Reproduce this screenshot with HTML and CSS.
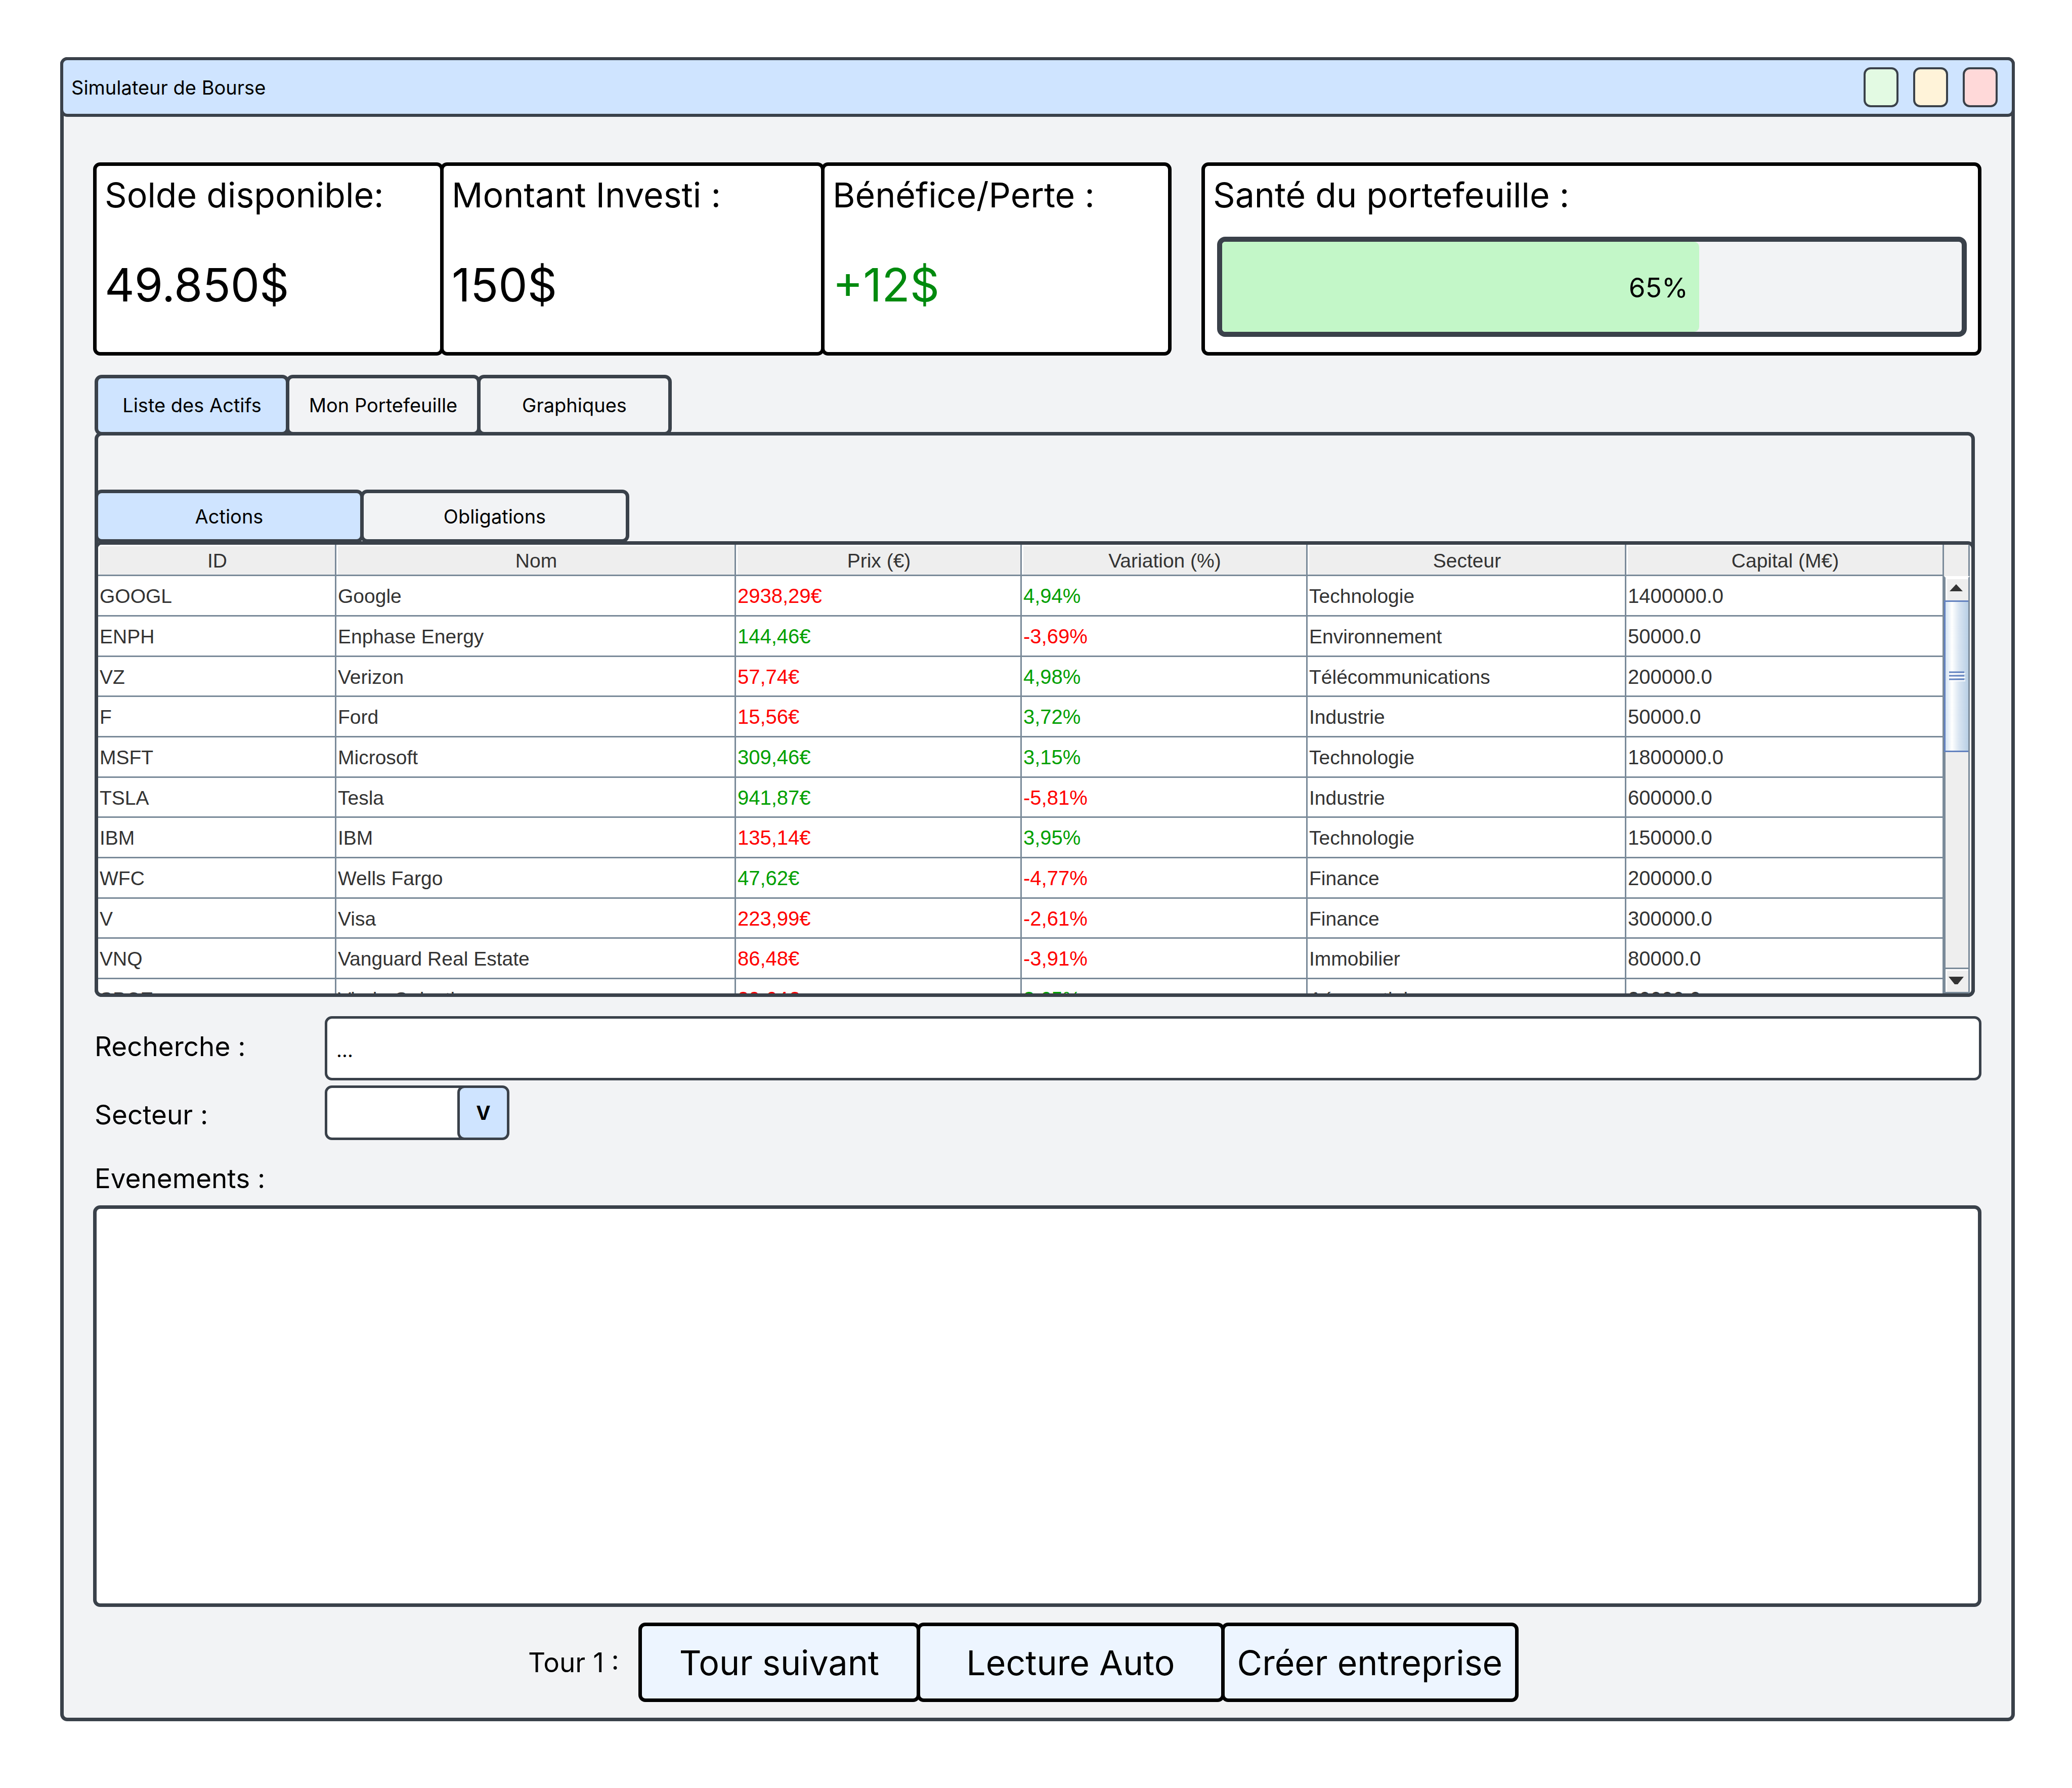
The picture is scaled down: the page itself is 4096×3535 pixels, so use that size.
FILE: index.html
```html
<!DOCTYPE html>
<html lang="fr">
<head>
<meta charset="utf-8">
<meta name="viewport" content="width=device-width, initial-scale=1">
<title>Simulateur de Bourse</title>
<link rel="stylesheet" href="styles.css">
</head>
<body>
<div class="window">
  <header class="titlebar">
    <h1 class="titlebar-text">Simulateur de Bourse</h1>
    <div class="titlebar-buttons">
      <button class="win-btn win-min" type="button" aria-label="Réduire"></button>
      <button class="win-btn win-max" type="button" aria-label="Agrandir"></button>
      <button class="win-btn win-close" type="button" aria-label="Fermer"></button>
    </div>
  </header>

  <main class="content">
    <section class="summary">
      <div class="card card-joined">
        <h2 class="card-label">Solde disponible:</h2>
        <p class="card-value">49.850$</p>
      </div>
      <div class="card card-joined">
        <h2 class="card-label">Montant Investi :</h2>
        <p class="card-value">150$</p>
      </div>
      <div class="card">
        <h2 class="card-label">Bénéfice/Perte :</h2>
        <p class="card-value gain">+12$</p>
      </div>
      <div class="card card-health">
        <h2 class="card-label">Santé du portefeuille :</h2>
        <div class="meter" role="progressbar" aria-label="Santé du portefeuille" aria-valuemin="0" aria-valuemax="100" aria-valuenow="65">
          <div class="meter-fill" style="width: 64.5%">65%</div>
        </div>
      </div>
    </section>

    <nav class="tabs">
      <button class="tab active" type="button">Liste des Actifs</button>
      <button class="tab" type="button">Mon Portefeuille</button>
      <button class="tab" type="button">Graphiques</button>
    </nav>

    <section class="panel">
      <nav class="subtabs">
        <button class="tab active" type="button">Actions</button>
        <button class="tab" type="button">Obligations</button>
      </nav>
      <div class="frame">
        <table class="assets">
          <colgroup>
            <col class="col-id"><col class="col-name"><col class="col-price"><col class="col-change"><col class="col-sector"><col class="col-capital">
          </colgroup>
          <thead>
            <tr><th>ID</th><th>Nom</th><th>Prix (€)</th><th>Variation (%)</th><th>Secteur</th><th>Capital (M€)</th></tr>
          </thead>
          <tbody>
            <tr><td>GOOGL</td><td>Google</td><td class="num down">2938,29€</td><td class="num up">4,94%</td><td>Technologie</td><td class="num">1400000.0</td></tr>
            <tr><td>ENPH</td><td>Enphase Energy</td><td class="num up">144,46€</td><td class="num down">-3,69%</td><td>Environnement</td><td class="num">50000.0</td></tr>
            <tr><td>VZ</td><td>Verizon</td><td class="num down">57,74€</td><td class="num up">4,98%</td><td>Télécommunications</td><td class="num">200000.0</td></tr>
            <tr><td>F</td><td>Ford</td><td class="num down">15,56€</td><td class="num up">3,72%</td><td>Industrie</td><td class="num">50000.0</td></tr>
            <tr><td>MSFT</td><td>Microsoft</td><td class="num up">309,46€</td><td class="num up">3,15%</td><td>Technologie</td><td class="num">1800000.0</td></tr>
            <tr><td>TSLA</td><td>Tesla</td><td class="num up">941,87€</td><td class="num down">-5,81%</td><td>Industrie</td><td class="num">600000.0</td></tr>
            <tr><td>IBM</td><td>IBM</td><td class="num down">135,14€</td><td class="num up">3,95%</td><td>Technologie</td><td class="num">150000.0</td></tr>
            <tr><td>WFC</td><td>Wells Fargo</td><td class="num up">47,62€</td><td class="num down">-4,77%</td><td>Finance</td><td class="num">200000.0</td></tr>
            <tr><td>V</td><td>Visa</td><td class="num down">223,99€</td><td class="num down">-2,61%</td><td>Finance</td><td class="num">300000.0</td></tr>
            <tr><td>VNQ</td><td>Vanguard Real Estate</td><td class="num down">86,48€</td><td class="num down">-3,91%</td><td>Immobilier</td><td class="num">80000.0</td></tr>
            <tr><td>SPCE</td><td>Virgin Galactic</td><td class="num down">29,64€</td><td class="num up">3,65%</td><td>Aérospatiale</td><td class="num">20000.0</td></tr>
          </tbody>
        </table>
        <div class="side">
          <div class="side-head"></div>
          <div class="scrollbar">
            <button class="scroll-btn scroll-up" type="button" aria-label="Défiler vers le haut">
              <svg width="26" height="14" viewBox="0 0 26 14"><path d="M13 0 26 14H0Z" fill="#333"/></svg>
            </button>
            <div class="thumb">
              <svg width="32" height="20" viewBox="0 0 32 20"><path d="M2 5H32M2 12H32M2 19H32" stroke="#fff" stroke-width="2"/><path d="M0 2H30M0 9H30M0 16H30" stroke="#6382bf" stroke-width="3"/></svg>
            </div>
            <button class="scroll-btn scroll-down" type="button" aria-label="Défiler vers le bas">
              <svg width="30" height="15" viewBox="0 0 30 15"><path d="M0 0H30L18 15H12Z" fill="#333"/></svg>
            </button>
          </div>
        </div>
      </div>
    </section>

    <form class="filters">
      <label class="field-label label-search" for="search">Recherche :</label>
      <input class="search" id="search" type="text" value="...">
      <label class="field-label label-sector" for="sector">Secteur :</label>
      <div class="combo">
        <select class="combo-select" id="sector"><option></option></select>
        <button class="combo-btn" type="button">V</button>
      </div>
    </form>

    <label class="events-label" for="events">Evenements :</label>
    <textarea class="events" id="events"></textarea>

    <footer class="actions">
      <span class="turn">Tour 1 :</span>
      <div class="action-group">
        <button class="action action-next" type="button">Tour suivant</button>
        <button class="action action-auto" type="button">Lecture Auto</button>
        <button class="action action-create" type="button">Créer entreprise</button>
      </div>
    </footer>
  </main>
</div>
</body>
</html>
```
FILE: styles.css
```css
:root {
  --line: #3a414a;
  --surface: #f2f3f5;
  --accent: #cfe4ff;
  --grid: #7a8a99;
}

* {
  box-sizing: border-box;
}

body {
  margin: 0;
  min-height: 100vh;
  padding: 113px 113px 132px 119px;
  display: flex;
  background: #fff;
  color: #000;
  font-family: Inter, "Liberation Sans", sans-serif;
  font-size: 38px;
}

h1, h2, p {
  margin: 0;
  font-weight: 400;
}

button, input, select, textarea {
  margin: 0;
  padding: 0;
  font: inherit;
  color: inherit;
}

.window {
  flex: 1;
  min-width: 0;
  display: flex;
  flex-direction: column;
  border: 7px solid var(--line);
  border-radius: 14px;
  background: var(--surface);
}

.titlebar {
  display: flex;
  align-items: center;
  justify-content: space-between;
  height: 118px;
  margin: -7px -7px 0;
  padding: 0 28px 0 16px;
  border: 6px solid var(--line);
  border-radius: 14px;
  background: var(--accent);
}

.titlebar-text {
  font-size: 38px;
  padding-top: 2px;
}

.titlebar-buttons {
  display: flex;
  gap: 29px;
}

.win-btn {
  width: 69px;
  height: 79px;
  border: 4px solid var(--line);
  border-radius: 14px;
}

.win-min { background: #e3fae3; }
.win-max { background: #fff3d9; }
.win-close { background: #ffd9d9; }

.content {
  flex: 1;
  display: flex;
  flex-direction: column;
  padding: 90px 59px 31px 58px;
}

/* Account summary: the first three cards share their side borders */
.summary {
  display: grid;
  grid-template-columns: 686fr 753fr 693fr 1601fr;
}

.card {
  height: 382px;
  padding: 15px 16px;
  border: 7px solid #000;
  border-radius: 14px;
  background: #fff;
}

.card-joined { margin-right: -7px; }
.card-health { margin-left: 59px; }

.card-label {
  font-size: 68px;
  line-height: 84px;
}

.card-value {
  margin-top: 81px;
  font-size: 91px;
  line-height: 110px;
}

.gain {
  color: #008a0e;
}

.meter {
  height: 198px;
  margin: 41px 6px 0 8px;
  border: 10px solid var(--line);
  border-radius: 16px;
  background: var(--surface);
}

.meter-fill {
  display: flex;
  align-items: center;
  justify-content: flex-end;
  height: 100%;
  padding: 4px 22px 0 0;
  border-radius: 6px 10px 10px 6px;
  background: #c3f7c8;
  font-size: 53px;
}

/* Tabs */
.tabs {
  display: flex;
  margin: 38px 13px 0 3px;
}

.tab {
  width: 385px;
  height: 120px;
  border: 7px solid var(--line);
  border-radius: 14px;
  background: var(--surface);
}

.tab + .tab {
  margin-left: -7px;
}

.tab.active {
  background: var(--accent);
}

.panel {
  margin: -7px 13px 0 3px;
  padding-top: 107px;
  border: 7px solid var(--line);
  border-radius: 14px;
}

.subtabs {
  display: flex;
  margin: 0 -7px -3px;
}

.subtabs .tab {
  width: 532px;
  height: 105px;
}

/* Asset table */
.frame {
  display: flex;
  height: 901px;
  margin: 0 -7px -7px;
  border: 7px solid var(--line);
  border-radius: 14px;
  background: #fff;
  overflow: hidden;
}

.assets {
  flex: 1;
  min-width: 0;
  table-layout: fixed;
  border-collapse: separate;
  border-spacing: 0;
  color: #333;
  font-family: "Liberation Sans", Arial, sans-serif;
  font-size: 39px;
  line-height: 45px;
  height: 0;
}

.col-id { width: 471px; }
.col-name { width: 790px; }
.col-price { width: 565px; }
.col-change { width: 565px; }
.col-sector { width: 630px; }
.col-capital { width: 628px; }

.assets th {
  height: 62px;
  padding: 4px 3px 0 6px;
  border-right: 3px solid var(--grid);
  border-bottom: 3px solid var(--grid);
  background: #eee;
  box-shadow: inset 3px 3px 0 #fff;
  font-weight: 400;
  text-align: center;
}

.assets td {
  height: 80px;
  padding: 2px 3px 0;
  border-right: 3px solid var(--grid);
  border-bottom: 3px solid var(--grid);
  white-space: nowrap;
}

.assets tr:nth-child(3n) td {
  height: 79px;
}

.assets .num { font-size: 40px; }
.up { color: #00a000; }
.down { color: #f00; }

.side {
  flex: none;
  display: flex;
  flex-direction: column;
  width: 51px;
  margin-right: 3px;
}

.side-head {
  height: 62px;
  border-right: 3px solid var(--grid);
  background: #eee;
}

.scrollbar {
  flex: 1;
  display: flex;
  flex-direction: column;
  border: 3px solid var(--grid);
  border-top: 3px solid #fff;
  background: #eee;
}

.scroll-btn {
  display: flex;
  align-items: center;
  justify-content: center;
  height: 46px;
  padding: 0 3px 6px 0;
  border: 0;
  background: #eee;
  box-shadow: inset 3px 3px 0 #fff;
}

.scroll-down {
  height: 48px;
  margin-top: auto;
  padding-bottom: 0;
  border-top: 3px solid var(--grid);
}

.thumb {
  display: flex;
  align-items: center;
  justify-content: center;
  height: 300px;
  margin: -1px 0 0 -3px;
  border: 3px solid #6382bf;
  border-right: 0;
  background: linear-gradient(90deg, #d4e3f2, #fff 28%, #d8e4f1 60%, #b8cfe5);
}

/* Filters */
.filters {
  display: grid;
  grid-template-columns: 455px 1fr;
  gap: 10px 0;
  margin: 38px 0 0 3px;
  align-items: center;
}

.field-label, .events-label {
  font-size: 53px;
  line-height: 66px;
}

.label-search {
  padding-bottom: 8px;
}

.label-sector {
  padding-top: 8px;
}

.search {
  width: 100%;
  height: 127px;
  padding: 6px 18px 0;
  border: 5px solid var(--line);
  border-radius: 14px;
  background: #fff;
}

.combo {
  display: flex;
}

.combo-select {
  appearance: none;
  width: 276px;
  height: 108px;
  margin-right: -14px;
  border: 5px solid var(--line);
  border-radius: 14px 0 0 14px;
  background: #fff;
}

.combo-btn {
  width: 103px;
  height: 108px;
  border: 5px solid var(--line);
  border-radius: 14px;
  background: var(--accent);
  font-weight: 700;
}

/* Events */
.events-label {
  margin: 43px 0 20px 3px;
}

.events {
  flex: 1;
  min-height: 400px;
  padding: 16px;
  border: 7px solid var(--line);
  border-radius: 14px;
  background: #fff;
  resize: none;
}

/* Bottom actions */
.actions {
  display: flex;
  align-items: center;
  justify-content: center;
  gap: 38px;
  margin-top: 31px;
  padding-right: 55px;
}

.turn {
  font-size: 53px;
}

.action-group {
  display: flex;
}

.action {
  height: 157px;
  border: 7px solid #000;
  border-radius: 14px;
  background: #edf5ff;
  font-size: 68px;
}

.action + .action {
  margin-left: -7px;
}

.action-next { width: 557px; }
.action-auto { width: 609px; }
.action-create { width: 588px; }
```
